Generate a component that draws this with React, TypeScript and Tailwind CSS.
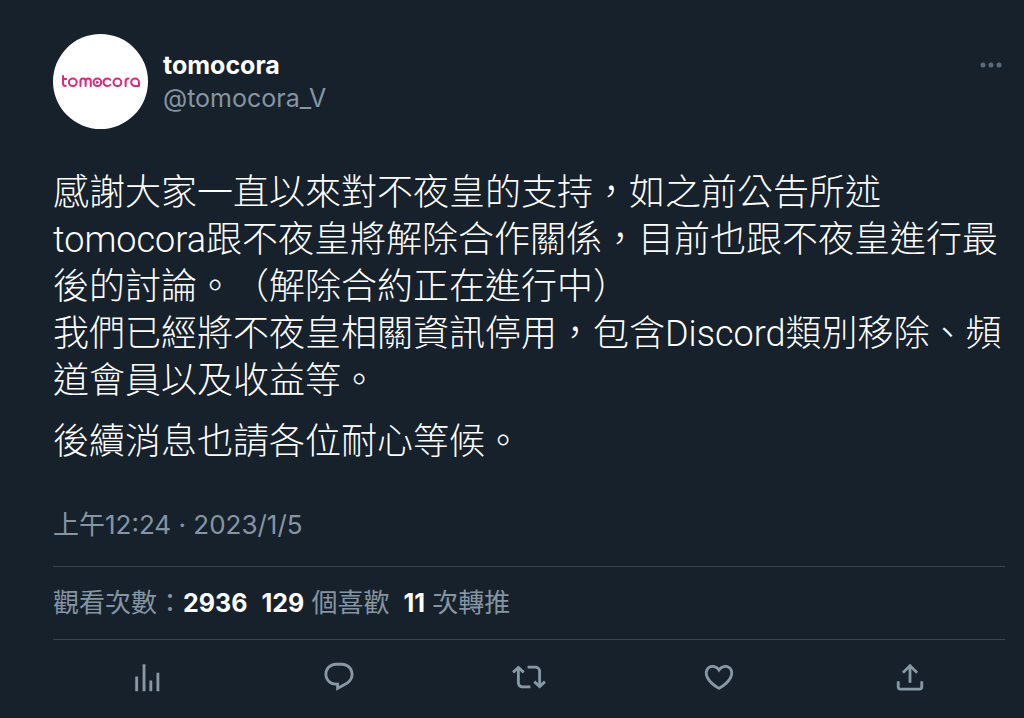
import React from 'react';

const PARAGRAPHS = [
  [
    '感謝大家一直以來對不夜皇的支持，如之前公告所述',
    'tomocora跟不夜皇將解除合作關係，目前也跟不夜皇進行最後的討論。（解除合約正在進行中）',
    '我們已經將不夜皇相關資訊停用，包含Discord類別移除、頻道會員以及收益等。',
  ],
  ['後續消息也請各位耐心等候。'],
];

const ACTIONS = [
  {
    label: '查看推文活動',
    path: 'M3 11.7h2V22H3zM8.2 3h2v19h-2zM13 14.4h2V22h-2zM18 9h2v13h-2z',
  },
  {
    label: '回覆',
    path: 'M1.751 10c0-4.42 3.584-8 8.005-8h4.366c4.49 0 8.129 3.64 8.129 8.13 0 2.96-1.607 5.68-4.196 7.11l-8.054 4.46v-3.69h-.067c-4.49.1-8.183-3.51-8.183-8.01zm8.005-6c-3.317 0-6.005 2.69-6.005 6 0 3.37 2.77 6.08 6.138 6.01l.351-.01h1.761v2.3l5.087-2.81c1.951-1.08 3.163-3.13 3.163-5.36 0-3.39-2.744-6.13-6.129-6.13H9.756z',
  },
  {
    label: '轉推',
    path: 'M4.5 3.88l4.432 4.14-1.364 1.46L5.5 7.55V16c0 1.1.896 2 2 2H13v2H7.5c-2.209 0-4-1.79-4-4V7.55L1.432 9.48.068 8.02 4.5 3.88zM16.5 6H11V4h5.5c2.209 0 4 1.79 4 4v8.45l2.068-1.93 1.364 1.46-4.432 4.14-4.432-4.14 1.364-1.46 2.068 1.93V8c0-1.1-.896-2-2-2z',
  },
  {
    label: '喜歡',
    path: 'M16.697 5.5c-1.222-.06-2.679.51-3.89 2.16l-.805 1.09-.806-1.09C9.984 6.01 8.526 5.44 7.304 5.5c-1.243.07-2.349.78-2.91 1.91-.552 1.12-.633 2.78.479 4.82 1.074 1.97 3.257 4.27 7.129 6.61 3.87-2.34 6.052-4.64 7.126-6.61 1.111-2.04 1.03-3.7.477-4.82-.561-1.13-1.666-1.84-2.908-1.91zm4.187 7.69c-1.351 2.48-4.001 5.12-8.379 7.67l-.503.3-.504-.3c-4.379-2.55-7.029-5.19-8.382-7.67-1.36-2.5-1.41-4.86-.514-6.67.887-1.79 2.647-2.91 4.601-3.01 1.651-.09 3.368.56 4.798 2.01 1.429-1.45 3.146-2.1 4.796-2.01 1.954.1 3.714 1.22 4.601 3.01.896 1.81.846 4.17-.514 6.67z',
  },
  {
    label: '分享',
    path: 'M12 2.6l5.7 5.7-1.4 1.4-3.3-3.3V16h-2V6.4L7.7 9.7 6.3 8.3 12 2.6zM21.3 15v4c0 1.4-1.1 2.5-2.5 2.5H5.2c-1.4 0-2.5-1.1-2.5-2.5v-4h2v4c0 .3.2.5.5.5h13.6c.3 0 .5-.2.5-.5v-4h2z',
  },
];

const Logo: React.FC = () => (
  <svg viewBox="0 0 78 14" className="w-[80px] h-[14px]" preserveAspectRatio="none" fill="none" stroke="#e0287d" strokeWidth="2" strokeLinecap="round" strokeLinejoin="round">
    {/* t o m */}
    <path d="M2 1v7.5c0 1.6 1 2.5 2.5 2.5M2 4h3" />
    <circle cx="11.5" cy="7.3" r="3.8" />
    <path d="M19 11V6c0-1.6 1-2.5 2.5-2.5S24 4.4 24 6v5M24 6c0-1.6 1-2.5 2.5-2.5S29 4.4 29 6v5" />
    {/* o with the play mark */}
    <circle cx="35.5" cy="7.3" r="3.8" />
    <path d="M34.8 6.2v2.2l1.7-1.1z" fill="#e0287d" strokeWidth="1" />
    {/* c o r a */}
    <path d="M48 4.7a3.8 3.8 0 1 0 0 5.2" />
    <circle cx="55" cy="7.3" r="3.8" />
    <path d="M63 11V6.3c0-1.8 1-2.8 2.8-2.8" />
    <path d="M76 11V7.3a3.8 3.8 0 1 0-3.8 3.8H76" />
  </svg>
);

const Count: React.FC<{ value: number }> = ({ value }) => (
  <strong className="text-[25px] font-bold text-white">{value}</strong>
);

const App: React.FC = () => {
  return (
    <main
      lang="zh-Hant"
      className="min-h-screen bg-[#17212b] pl-[53px] pr-[19px] pt-[34px] text-[26px] leading-[33px] text-[#8595a3] font-[Inter,'Noto_Sans_CJK_TC',sans-serif]"
    >
      <article>
        <header className="flex items-start">
          <div className="flex size-[95px] shrink-0 items-center justify-center rounded-full bg-white">
            <Logo />
          </div>
          <div className="ml-[15px] mt-[15px] flex-1 text-[25px]">
            <h1 className="font-bold text-white">tomocora</h1>
            <p>@tomocora_V</p>
          </div>
          <button type="button" aria-label="更多" className="mt-[19px] text-[#5c6b7a]">
            <svg viewBox="0 0 28 24" className="w-[28px] h-[24px]" fill="currentColor">
              <circle cx="6" cy="12" r="2.5" />
              <circle cx="14" cy="12" r="2.5" />
              <circle cx="22" cy="12" r="2.5" />
            </svg>
          </button>
        </header>

        <div className="mt-[41px] space-y-[14px] text-[36px] leading-[47px] font-light text-white font-[Roboto,'Noto_Sans_CJK_TC',sans-serif] [text-spacing-trim:space-all]">
          {PARAGRAPHS.map((lines, i) => (
            <div key={i}>
              {lines.map((line) => (
                <p key={line}>{line}</p>
              ))}
            </div>
          ))}
        </div>

        <p className="mt-[42px]">
          <time dateTime="2023-01-05T00:24">上午12:24 · 2023/1/5</time>
        </p>

        <div className="mt-[25px] flex border-y border-[#38444d] py-[19px] whitespace-pre">
          <p>觀看次數：<Count value={2936} /></p>
          <p className="ml-[14px]"><Count value={129} /> 個喜歡</p>
          <p className="ml-[14px]"><Count value={11} /> 次轉推</p>
        </div>

        <div className="grid grid-cols-5 pt-[20px] text-[#8899a6]">
          {ACTIONS.map((action) => (
            <button key={action.label} type="button" aria-label={action.label} className="flex justify-center">
              <svg viewBox="0 0 24 24" className="size-[34px]" fill="currentColor">
                <path d={action.path} />
              </svg>
            </button>
          ))}
        </div>
      </article>
    </main>
  );
};

export default App;
